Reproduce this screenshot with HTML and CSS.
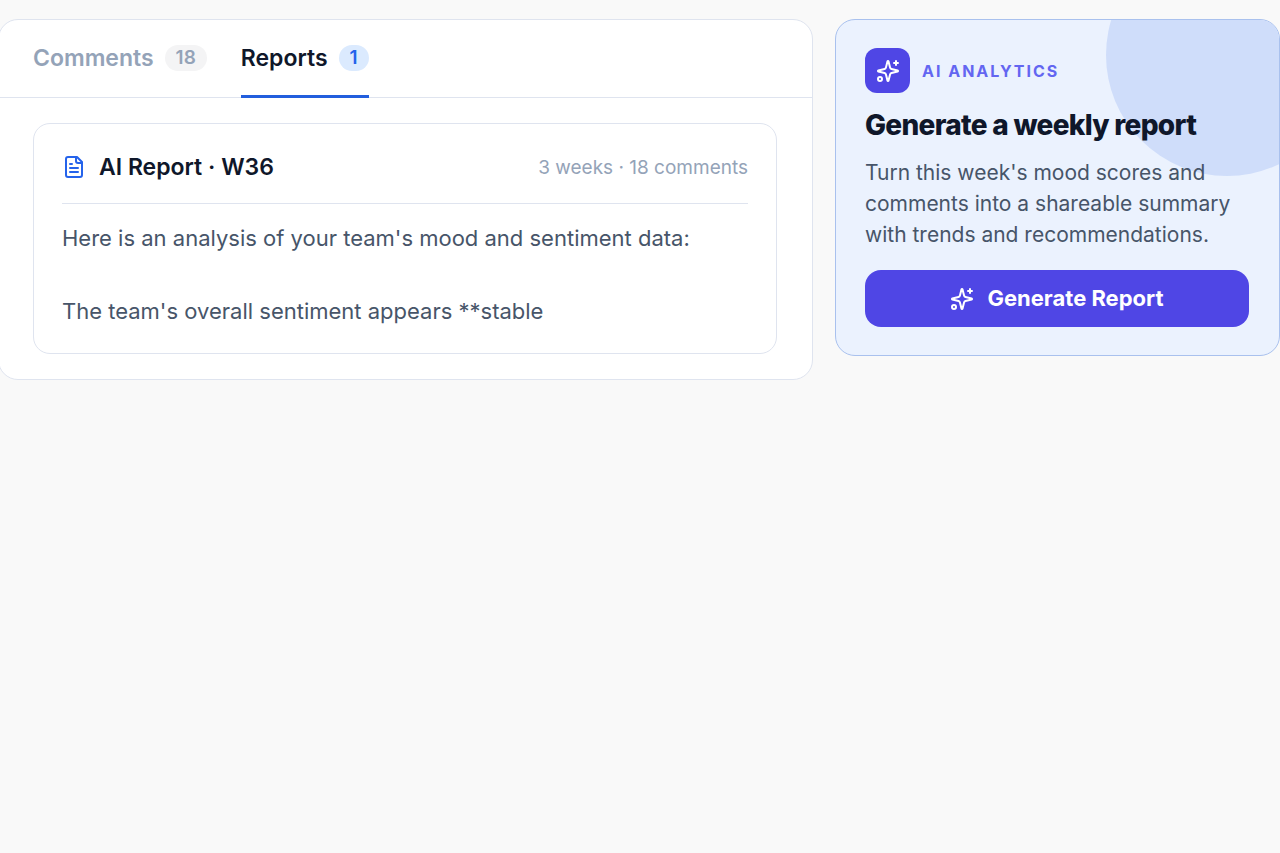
FILE: index.html
```html
<!DOCTYPE html>
<html lang="en">
<head>
<meta charset="utf-8">
<meta name="viewport" content="width=device-width, initial-scale=1">
<title>Team reports</title>
<link rel="stylesheet" href="styles.css">
</head>
<body>
<svg class="sprite" aria-hidden="true">
  <symbol id="sparkles" viewBox="0 0 24 24">
    <path d="M9.937 15.5A2 2 0 0 0 8.5 14.063l-6.135-1.582a.5.5 0 0 1 0-.962L8.5 9.936A2 2 0 0 0 9.937 8.5l1.582-6.135a.5.5 0 0 1 .963 0L14.063 8.5A2 2 0 0 0 15.5 9.937l6.135 1.581a.5.5 0 0 1 0 .964L15.5 14.063a2 2 0 0 0-1.437 1.437l-1.582 6.135a.5.5 0 0 1-.963 0z"/>
    <path d="M20 2v4M22 4h-4"/>
    <circle cx="4" cy="20" r="2"/>
  </symbol>
</svg>
<main class="page">
  <section class="panel">
    <div class="tabs" role="tablist">
      <button class="tab" type="button" role="tab" aria-selected="false">Comments <span class="count">18</span></button>
      <button class="tab tab-active" type="button" role="tab" aria-selected="true">Reports <span class="count">1</span></button>
    </div>
    <div class="panel-body">
      <article class="report">
        <header class="report-head">
          <svg class="icon report-icon" viewBox="0 0 24 24" aria-hidden="true">
            <path d="M15 2H6a2 2 0 0 0-2 2v16a2 2 0 0 0 2 2h12a2 2 0 0 0 2-2V7z"/>
            <path d="M14 2v4a2 2 0 0 0 2 2h4M10 9H8M16 13H8M16 17H8"/>
          </svg>
          <h2 class="report-title">AI Report · W36</h2>
          <span class="report-meta">3 weeks · 18 comments</span>
        </header>
        <div class="report-text">
          <p>Here is an analysis of your team's mood and sentiment data:</p>
          <p>The team's overall sentiment appears **stable</p>
        </div>
      </article>
    </div>
  </section>
  <aside class="promo">
    <div class="promo-head">
      <span class="promo-badge"><svg class="icon" aria-hidden="true"><use href="#sparkles"/></svg></span>
      <span class="eyebrow">AI ANALYTICS</span>
    </div>
    <h2 class="promo-title">Generate a weekly report</h2>
    <p class="promo-text">Turn this week's mood scores and comments into a shareable summary with trends and recommendations.</p>
    <button class="generate" type="button"><svg class="icon" aria-hidden="true"><use href="#sparkles"/></svg>Generate Report</button>
  </aside>
</main>
</body>
</html>
```
FILE: styles.css
```css
* { box-sizing: border-box; }
body {
  margin: 0;
  background: #f9f9f9;
  color: #0f172a;
  font-family: Inter, "Liberation Sans", sans-serif;
  overflow-x: hidden;
}
h2, p { margin: 0; }
button { font: inherit; border: 0; cursor: pointer; }
.sprite { display: none; }
.icon {
  width: 24px;
  height: 24px;
  flex: none;
  fill: none;
  stroke: currentColor;
  stroke-width: 2;
  stroke-linecap: round;
  stroke-linejoin: round;
}
.page {
  display: grid;
  grid-template-columns: minmax(0, 1fr) 445px;
  gap: 22px;
  align-items: start;
  margin: 19px 0 0 -2px;
}
.panel {
  background: #fff;
  border: 1px solid #dfe4ef;
  border-radius: 20px;
}
.tabs {
  display: flex;
  gap: 34px;
  padding: 0 34px;
  border-bottom: 1px solid #dfe4ef;
}
.tab {
  display: flex;
  align-items: center;
  gap: 11px;
  margin-bottom: -1px;
  padding: 24px 0 23px;
  border-bottom: 3px solid transparent;
  background: none;
  color: #94a3b8;
  font-size: 23px;
  font-weight: 600;
  line-height: 28px;
}
.tab-active { border-color: #225edd; color: #0f172a; }
.count {
  padding: 0 11px;
  border-radius: 13px;
  background: #f4f4f5;
  font-size: 19px;
  line-height: 26px;
}
.tab-active .count { background: #dbeafe; color: #2563eb; }
.panel-body { padding: 25px 35px 25px 34px; }
.report {
  padding: 25px 28px 24px;
  border: 1px solid #dfe4ef;
  border-radius: 17px;
}
.report-head {
  display: flex;
  align-items: center;
  gap: 13px;
  padding-bottom: 18px;
  border-bottom: 1px solid #dfe4ef;
}
.report-icon { color: #2563eb; }
.report-title { font-size: 23px; font-weight: 600; line-height: 36px; }
.report-meta { margin-left: auto; color: #94a3b8; font-size: 19px; }
.report-text {
  display: grid;
  gap: 37px;
  padding-top: 16px;
  color: #475569;
  font-size: 22px;
  line-height: 36px;
}
.promo {
  position: relative;
  z-index: 0;
  overflow: hidden;
  padding: 28px 30px 28px 29px;
  border: 1px solid #a9c1ee;
  border-radius: 20px;
  background: #ebf2fe;
}
.promo::before {
  content: "";
  position: absolute;
  z-index: -1;
  top: -86px;
  right: -69px;
  width: 242px;
  height: 242px;
  border-radius: 50%;
  background: #cfddfa;
}
.promo-head { display: flex; align-items: center; gap: 12px; }
.promo-badge {
  display: grid;
  place-items: center;
  width: 45px;
  height: 45px;
  border-radius: 12px;
  background: #4f46e5;
  color: #fff;
}
.eyebrow { color: #6366f1; font-size: 16px; font-weight: 700; letter-spacing: 2px; }
.promo-title {
  margin-top: 14px;
  font-size: 28px;
  font-weight: 800;
  line-height: 36px;
  letter-spacing: -0.025em;
}
.promo-text { margin-top: 14px; color: #475569; font-size: 21px; line-height: 31px; }
.generate {
  display: flex;
  align-items: center;
  justify-content: center;
  gap: 13px;
  width: 100%;
  margin-top: 20px;
  padding: 14px;
  border-radius: 16px;
  background: #4f46e5;
  color: #fff;
  font-size: 22px;
  font-weight: 700;
  line-height: 29px;
}
```
